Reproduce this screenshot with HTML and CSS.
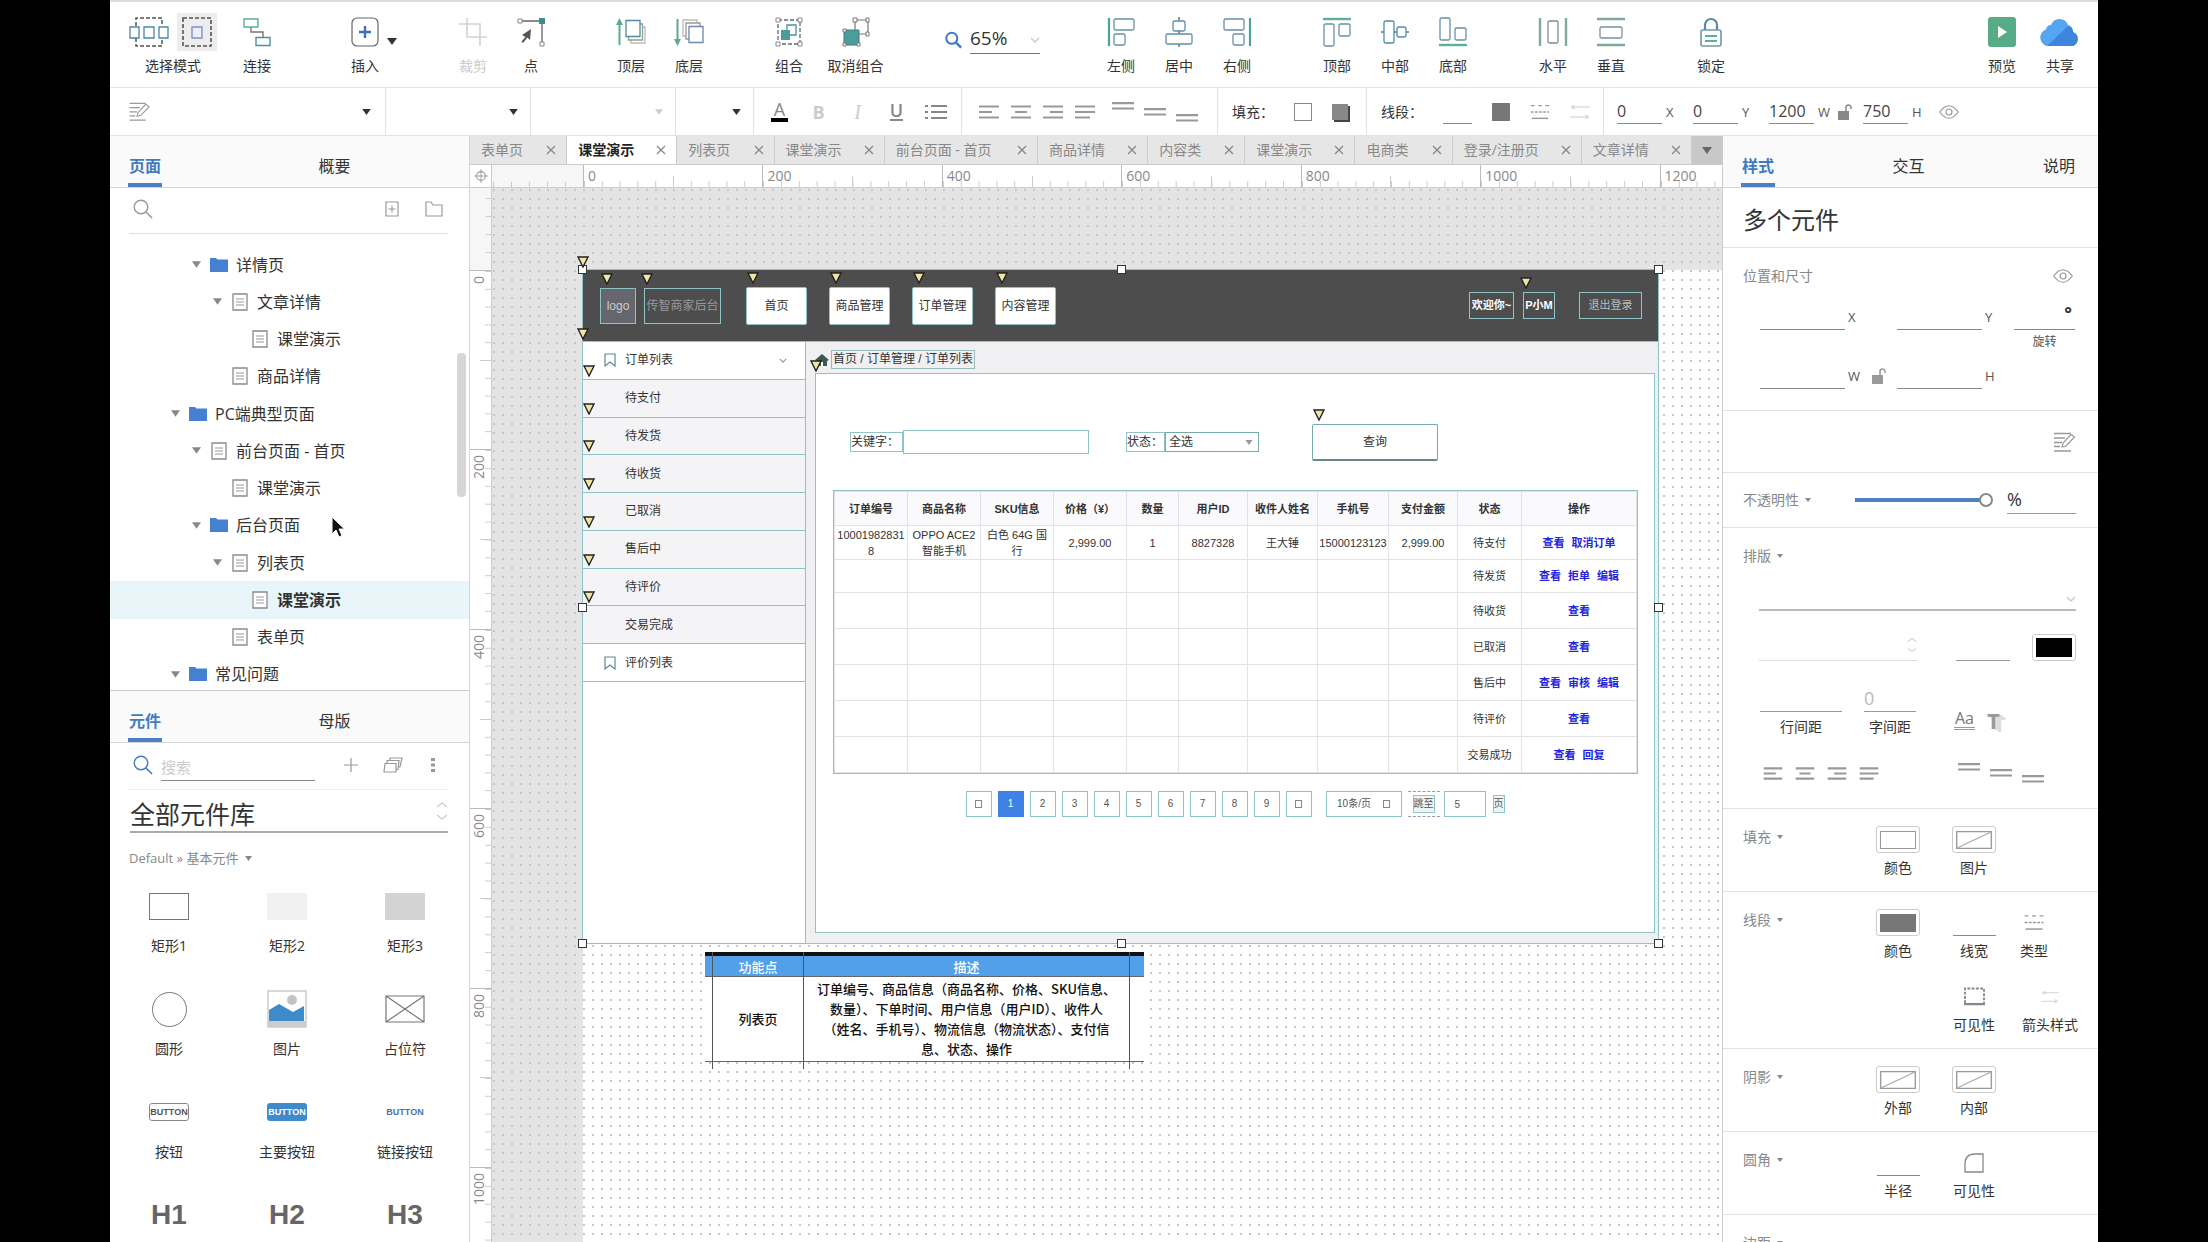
FILE: index.html
```html
<!DOCTYPE html>
<html lang="zh-CN">
<head>
<meta charset="utf-8">
<title>课堂演示 - 列表页</title>
<link rel="stylesheet" href="styles.css">
</head>
<body>
<svg class="sprite" aria-hidden="true">
  <symbol id="i-sel-multi" viewBox="0 0 40 30"><path d="M7 9V1h26v8M7 21v8h26v-8" fill="none" stroke="#555" stroke-width="1.5" stroke-dasharray="4 2"/><g fill="#fff" stroke="#4b86a8" stroke-width="1.3"><path d="M1 10h9v11H1zM15 10h10v11H15zM30 10h9v11h-9z"/></g></symbol>
  <symbol id="i-sel-one" viewBox="0 0 30 30"><path d="M1 1h28v28H1z" fill="none" stroke="#555" stroke-width="1.6" stroke-dasharray="4 2"/><path d="M10 10h10v11H10z" fill="#eef" stroke="#7b93c4" stroke-width="1.4"/></symbol>
  <symbol id="i-connect" viewBox="0 0 28 30"><g fill="none" stroke-width="1.4"><path d="M1 2h14v8H1z" stroke="#5fae9a"/><path d="M13 20.500h14v8H13z" stroke="#4b8f9d"/><path d="M8 10v5h12v5" stroke="#777"/></g></symbol>
  <symbol id="i-insert" viewBox="0 0 28 30"><rect x="1" y="1" width="26" height="28" rx="5" fill="#fff" stroke="#666" stroke-width="1.2"/><path d="M14 9v12M8 15h12" stroke="#3d70b8" stroke-width="2.4"/></symbol>
  <symbol id="i-crop" viewBox="0 0 28 30"><path d="M8 1v19h20M0 7h21v22" fill="none" stroke="#d2d2d2" stroke-width="1.6"/></symbol>
  <symbol id="i-point" viewBox="0 0 28 30"><path d="M4 4h21v22" fill="none" stroke="#666" stroke-width="1.3"/><path d="M1 2h4v4H1zM23 25h4v4h-4z" fill="#fff" stroke="#888"/><path d="M22 1h6v6h-6z" fill="#3f8a94"/><path d="M14 12l-1 11-2.500-2.500L6 26l-1.500-1.500 4-4.500L5 18z" fill="#555"/></symbol>
  <symbol id="i-front" viewBox="0 0 30 30"><path d="M3.500 28V4" stroke="#5bab8c" stroke-width="2"/><path d="M0 8l3.500-7L7 8z" fill="#5bab8c"/><g fill="#fff" stroke-width="1.300"><path d="M15 10h14v16H15z" stroke="#bbb"/><path d="M12.500 7h14v16h-14z" stroke="#999"/><path d="M10 3.500h14v16H10z" stroke="#4b8f9d"/></g></symbol>
  <symbol id="i-back" viewBox="0 0 30 30"><path d="M3.500 2v24" stroke="#5bab8c" stroke-width="2"/><path d="M0 22l3.500 7L7 22z" fill="#5bab8c"/><g fill="#fff" stroke-width="1.300"><path d="M9 3h14v16H9z" stroke="#bbb"/><path d="M12 6h14v16H12z" stroke="#999"/><path d="M15 9.500h14v16H15z" stroke="#6f86ad"/></g></symbol>
  <symbol id="i-group" viewBox="0 0 28 30"><path d="M3 3h22v24H3z" fill="none" stroke="#666" stroke-width="1.300" stroke-dasharray="4 2"/><g fill="#fff" stroke="#888"><path d="M1 1h4v4H1zM23 1h4v4h-4zM1 25h4v4H1zM23 25h4v4h-4z"/></g><path d="M12 8h9v10h-9z" fill="#fff" stroke="#4b8f9d" stroke-width="1.300"/><path d="M6 13h9v10H6z" fill="#4b9d9d"/></symbol>
  <symbol id="i-ungroup" viewBox="0 0 28 30"><path d="M13 3h13v14H13z" fill="#fff" stroke="#777" stroke-width="1.200"/><path d="M2 13h15v15H2z" fill="#4b9d9d" stroke="#3b7f80"/><g fill="#fff" stroke="#777"><path d="M11 1h4v4h-4zM24 1h3v4h-3zM24 15h3v4h-3zM1 12h3v3H1zM1 26h3v3H1zM15 26h3v3h-3z"/></g></symbol>
  <symbol id="i-al" viewBox="0 0 28 30"><path d="M2 1v28" stroke="#4ba0a0" stroke-width="2.200"/><g fill="#fff" stroke="#6a8fa8" stroke-width="1.300"><rect x="7" y="2" width="20" height="11" rx="1.500"/><rect x="7" y="17" width="11" height="11" rx="1.500"/></g></symbol>
  <symbol id="i-ac" viewBox="0 0 28 30"><path d="M14 0v30" stroke="#666" stroke-width="1.400"/><g fill="#fff" stroke="#5f8fa8" stroke-width="1.300"><rect x="8" y="4" width="12" height="10" rx="1.500"/><rect x="1" y="17" width="26" height="10" rx="1.500"/></g></symbol>
  <symbol id="i-ar" viewBox="0 0 28 30"><path d="M27 1v28" stroke="#4ba0a0" stroke-width="2.200"/><g fill="#fff" stroke="#6a8fa8" stroke-width="1.300"><rect x="1" y="2" width="20" height="11" rx="1.500"/><rect x="10" y="17" width="11" height="11" rx="1.500"/></g></symbol>
  <symbol id="i-at" viewBox="0 0 28 30"><path d="M0 2h28" stroke="#5fae9a" stroke-width="2.400"/><g fill="#fff" stroke="#6a8fa8" stroke-width="1.300"><rect x="1" y="7" width="10" height="22" rx="1.500"/><rect x="16" y="7" width="11" height="12" rx="1.500"/></g></symbol>
  <symbol id="i-am" viewBox="0 0 28 30"><path d="M0 15h28" stroke="#666" stroke-width="1.400"/><g fill="#fff" stroke="#4b8fa8" stroke-width="1.300"><rect x="3" y="4" width="10" height="22" rx="2"/><rect x="16" y="10" width="9" height="10" rx="2"/></g></symbol>
  <symbol id="i-ab" viewBox="0 0 28 30"><path d="M0 28h28" stroke="#5fae9a" stroke-width="2.400"/><g fill="#fff" stroke="#6a8fa8" stroke-width="1.300"><rect x="1" y="1" width="10" height="22" rx="1.500"/><rect x="16" y="11" width="11" height="12" rx="1.500"/></g></symbol>
  <symbol id="i-dh" viewBox="0 0 30 30"><path d="M2 1v28M28 1v28" stroke="#7fa99a" stroke-width="2.400"/><rect x="10" y="4" width="10" height="22" rx="1.500" fill="#fff" stroke="#888" stroke-width="1.300"/></symbol>
  <symbol id="i-dv" viewBox="0 0 28 30"><path d="M0 2h28M0 28h28" stroke="#7fa99a" stroke-width="2.400"/><rect x="3" y="10" width="22" height="11" rx="1.500" fill="#fff" stroke="#7b8fa8" stroke-width="1.300"/></symbol>
  <symbol id="i-lock" viewBox="0 0 24 30"><path d="M6 13V8a6 6 0 0 1 12 0v5" fill="none" stroke="#5f86a0" stroke-width="2.200"/><rect x="2" y="13" width="20" height="16" rx="2" fill="#fff" stroke="#6a9aa8" stroke-width="1.600"/><path d="M6 19h12M6 24h12" stroke="#5fae9a" stroke-width="2.200"/></symbol>
  <symbol id="i-play" viewBox="0 0 28 30"><rect width="28" height="30" rx="3" fill="#57ab87"/><path d="M10 9v12l9-6z" fill="#fff"/></symbol>
  <symbol id="i-cloud" viewBox="0 0 42 30"><path d="M9 29a8.500 8.500 0 0 1-2-16.500A5 5 0 0 1 12 8a9 9 0 0 1 17 0 7 7 0 0 1 5 7 7.500 7.500 0 0 1 0 14z" fill="#56a5f0"/><path d="M8 29L29 9a7 7 0 0 1 5 6 7.500 7.500 0 0 1 0 14z" fill="#3f85dc"/></symbol>
  <symbol id="i-search" viewBox="0 0 20 20"><circle cx="8" cy="8" r="6.800" fill="none" stroke="currentColor" stroke-width="1.400"/><path d="M13 13l6 6" stroke="currentColor" stroke-width="1.600"/></symbol>
  <symbol id="i-zoom" viewBox="0 0 20 20"><circle cx="8" cy="8" r="6.500" fill="none" stroke="currentColor" stroke-width="2.400"/><path d="M13 13l6 6" stroke="currentColor" stroke-width="2.800"/></symbol>
  <symbol id="i-caret" viewBox="0 0 10 7"><path d="M0 0h10L5 7z" fill="currentColor"/></symbol>
  <symbol id="i-edit" viewBox="0 0 22 20"><path d="M0 1.500h17M0 6h11M0 10.500h8M0 14.500h6M0 19h17" stroke="currentColor" stroke-width="1.300" fill="none"/><path d="M8 15l1-4 8-8.500 3.500 2.500-8.500 9z" fill="#fff" stroke="currentColor" stroke-width="1.200"/></symbol>
  <symbol id="i-list" viewBox="0 0 22 16"><path d="M0 2h3M0 8h3M0 14h3M6 2h16M6 8h16M6 14h16" stroke="currentColor" stroke-width="2.200"/></symbol>
  <symbol id="i-tl" viewBox="0 0 20 14"><path d="M0 1.500h20M0 7h13M0 12.500h20" stroke="currentColor" stroke-width="2.200"/></symbol>
  <symbol id="i-tc" viewBox="0 0 20 14"><path d="M0 1.500h20M4 7h12M0 12.500h20" stroke="currentColor" stroke-width="2.200"/></symbol>
  <symbol id="i-tr" viewBox="0 0 20 14"><path d="M0 1.500h20M7 7h13M0 12.500h20" stroke="currentColor" stroke-width="2.200"/></symbol>
  <symbol id="i-tj" viewBox="0 0 20 14"><path d="M0 1.500h20M0 7h20M0 12.500h15" stroke="currentColor" stroke-width="2.200"/></symbol>
  <symbol id="i-bars" viewBox="0 0 22 8"><path d="M0 1.200h22M0 6.500h22" stroke="currentColor" stroke-width="2.200"/></symbol>
  <symbol id="i-dash" viewBox="0 0 22 16"><path d="M1 1h22" stroke="currentColor" stroke-width="1.400" stroke-dasharray="4 4"/><path d="M1 8h20" stroke="currentColor" stroke-width="1.400" stroke-dasharray="3 1.500"/><path d="M2 15h18" stroke="currentColor" stroke-width="1.600"/></symbol>
  <symbol id="i-arrows" viewBox="0 0 20 14"><path d="M20 2H3M0 12h17M5 0L1 2.500 5 4M15 10l4 2-4 2" stroke="currentColor" fill="none" stroke-width="1"/></symbol>
  <symbol id="i-unlock" viewBox="0 0 14 16"><path d="M0 7h11v9H0z" fill="currentColor"/><path d="M8 7V3.500a2.500 2.500 0 0 1 5 0V5" fill="none" stroke="currentColor" stroke-width="1.500"/></symbol>
  <symbol id="i-eye" viewBox="0 0 20 14"><path d="M.700 7Q10-5.500 19.300 7 10 19.500.700 7z" fill="none" stroke="currentColor" stroke-width="1.200"/><circle cx="10" cy="7" r="3" fill="none" stroke="currentColor" stroke-width="1.200"/></symbol>
  <symbol id="i-x" viewBox="0 0 10 10"><path d="M1 1l8 8M9 1L1 9" stroke="currentColor" stroke-width="1.300"/></symbol>
  <symbol id="i-origin" viewBox="0 0 16 16"><path d="M8 0v16M0 8h16" stroke="currentColor"/><circle cx="8" cy="8" r="5" fill="none" stroke="currentColor" stroke-width="1.200"/></symbol>
  <symbol id="i-addpage" viewBox="0 0 14 16"><path d="M1 1h12v14H1zM7 4.500v7M3.500 8h7" fill="none" stroke="currentColor" stroke-width="1.200"/></symbol>
  <symbol id="i-folderline" viewBox="0 0 18 16"><path d="M1 15V1h5l2 3h9v11z" fill="none" stroke="currentColor" stroke-width="1.200"/></symbol>
  <symbol id="i-folder" viewBox="0 0 18 16"><path d="M0 1h6l1.500 1.500H18V15H0z" fill="#4580d2"/></symbol>
  <symbol id="i-page" viewBox="0 0 16 18"><path d="M1 1h14v16H1z" fill="#fff" stroke="#8a8a8a" stroke-width="1.300"/><path d="M4 6h8M4 9h8M4 12h8" stroke="#999" stroke-width="1.200"/></symbol>
  <symbol id="i-plus" viewBox="0 0 14 14"><path d="M7 0v14M0 7h14" stroke="currentColor" stroke-width="1.200"/></symbol>
  <symbol id="i-stack" viewBox="0 0 20 16"><g fill="#fff" stroke="currentColor" stroke-width="1.200"><path d="M7 1h12l-2 9H7z"/><path d="M4 3.500h12l-1 9H4z"/><path d="M2 6.500h11V15H1z"/></g></symbol>
  <symbol id="i-dots" viewBox="0 0 4 16"><path d="M0 1h4v3H0zM0 6.500h4v3H0zM0 12h4v3H0z" fill="currentColor"/></symbol>
  <symbol id="i-updown" viewBox="0 0 12 18"><path d="M1 5l5-4 5 4M1 13l5 4 5-4" fill="none" stroke="currentColor" stroke-width="1.300"/></symbol>
  <symbol id="i-down" viewBox="0 0 10 6"><path d="M1 1l4 4 4-4" fill="none" stroke="currentColor" stroke-width="1.500"/></symbol>
  <symbol id="i-bookmark" viewBox="0 0 12 14"><path d="M1 1h10v12L6 9l-5 4z" fill="none" stroke="#5f8a90" stroke-width="1.200"/></symbol>
  <symbol id="i-home" viewBox="0 0 14 14"><path d="M0 7l7-6 7 6-2 1v5H2V8z" fill="#3c5a55"/><path d="M6 9h2v4H6z" fill="#fff"/></symbol>
  <symbol id="i-note" viewBox="0 0 12 12"><path d="M1 1h10L6 11z" fill="#efe6a4" stroke="#222" stroke-width="1.400"/></symbol>
  <symbol id="i-none" viewBox="0 0 36 18"><path d="M.700.700h34.600v16.600H.700z" fill="#fff" stroke="#999" stroke-width="1.300"/><path d="M1 17L35 1" stroke="#aaa" stroke-width="1.300"/></symbol>
  <symbol id="i-sides" viewBox="0 0 22 20"><path d="M1 17V1.500h20V17" fill="none" stroke="#888" stroke-width="2" stroke-dasharray="3 1.500"/><path d="M0 18h22" stroke="#888" stroke-width="2.400"/></symbol>
  <symbol id="i-corner" viewBox="0 0 20 20"><path d="M1 19V11Q1 1 11 1h8v18z" fill="none" stroke="#888" stroke-width="1.300"/></symbol>
</svg>

<div class="app">
  <header class="toolbar">
    <div class="group">
      <div class="tool tool-wide">
        <div class="pair">
          <button class="bare mode" aria-label="相交选择"><svg width="40" height="30"><use href="#i-sel-multi"/></svg></button>
          <button class="bare mode mode-on" aria-label="包含选择"><svg width="30" height="30"><use href="#i-sel-one"/></svg></button>
        </div>
        <span>选择模式</span>
      </div>
      <button class="tool"><svg width="28" height="30"><use href="#i-connect"/></svg>连接</button>
    </div>
    <div class="group group-insert">
      <button class="tool"><svg width="28" height="30"><use href="#i-insert"/></svg>插入</button>
      <svg class="dark insert-caret" width="9" height="7"><use href="#i-caret"/></svg>
    </div>
    <div class="group">
      <button class="tool tool-off" disabled><svg width="28" height="30"><use href="#i-crop"/></svg>裁剪</button>
      <button class="tool"><svg width="28" height="30"><use href="#i-point"/></svg>点</button>
    </div>
    <div class="group">
      <button class="tool"><svg width="30" height="30"><use href="#i-front"/></svg>顶层</button>
      <button class="tool"><svg width="30" height="30"><use href="#i-back"/></svg>底层</button>
    </div>
    <div class="group">
      <button class="tool"><svg width="28" height="30"><use href="#i-group"/></svg>组合</button>
      <button class="tool tool-mid"><svg width="28" height="30"><use href="#i-ungroup"/></svg>取消组合</button>
    </div>
    <div class="zoom">
      <svg class="blue" width="17" height="18"><use href="#i-zoom"/></svg>
      <div class="zoom-field"><select aria-label="缩放"><option>65%</option></select><svg class="pale" width="10" height="6"><use href="#i-down"/></svg></div>
    </div>
    <div class="group">
      <button class="tool"><svg width="28" height="30"><use href="#i-al"/></svg>左侧</button>
      <button class="tool"><svg width="28" height="30"><use href="#i-ac"/></svg>居中</button>
      <button class="tool"><svg width="28" height="30"><use href="#i-ar"/></svg>右侧</button>
    </div>
    <div class="group">
      <button class="tool"><svg width="28" height="30"><use href="#i-at"/></svg>顶部</button>
      <button class="tool"><svg width="28" height="30"><use href="#i-am"/></svg>中部</button>
      <button class="tool"><svg width="28" height="30"><use href="#i-ab"/></svg>底部</button>
    </div>
    <div class="group">
      <button class="tool"><svg width="30" height="30"><use href="#i-dh"/></svg>水平</button>
      <button class="tool"><svg width="28" height="30"><use href="#i-dv"/></svg>垂直</button>
    </div>
    <div class="group">
      <button class="tool"><svg width="24" height="30"><use href="#i-lock"/></svg>锁定</button>
    </div>
    <div class="group group-end">
      <button class="tool"><svg width="28" height="30"><use href="#i-play"/></svg>预览</button>
      <button class="tool"><svg width="42" height="30"><use href="#i-cloud"/></svg>共享</button>
    </div>
  </header>

  <div class="options">
    <div class="seg seg-style"><svg class="grey" width="22" height="19"><use href="#i-edit"/></svg><select aria-label="样式"><option></option></select><svg class="dark" width="9" height="6"><use href="#i-caret"/></svg></div>
    <div class="seg seg-font"><select aria-label="字体"><option></option></select><svg class="dark" width="9" height="6"><use href="#i-caret"/></svg></div>
    <div class="seg seg-font"><select aria-label="字重"><option></option></select><svg class="pale" width="8" height="6"><use href="#i-caret"/></svg></div>
    <div class="seg seg-size"><select aria-label="字号"><option></option></select><svg class="dark" width="9" height="6"><use href="#i-caret"/></svg></div>
    <div class="seg seg-text">
      <button class="bare letter letter-a">A</button>
      <button class="bare letter letter-off"><b>B</b></button>
      <button class="bare letter letter-off serif"><em>I</em></button>
      <button class="bare letter letter-u">U</button>
      <button class="bare" aria-label="列表"><svg width="22" height="16"><use href="#i-list"/></svg></button>
    </div>
    <div class="seg seg-align">
      <button class="bare" aria-label="左对齐"><svg width="20" height="14"><use href="#i-tl"/></svg></button>
      <button class="bare" aria-label="居中对齐"><svg width="20" height="14"><use href="#i-tc"/></svg></button>
      <button class="bare" aria-label="右对齐"><svg width="20" height="14"><use href="#i-tr"/></svg></button>
      <button class="bare" aria-label="两端对齐"><svg width="20" height="14"><use href="#i-tj"/></svg></button>
      <div class="steps">
        <button class="bare step-a" aria-label="顶对齐"><svg width="22" height="8"><use href="#i-bars"/></svg></button>
        <button class="bare step-b" aria-label="中对齐"><svg width="22" height="8"><use href="#i-bars"/></svg></button>
        <button class="bare step-c" aria-label="底对齐"><svg width="22" height="8"><use href="#i-bars"/></svg></button>
      </div>
    </div>
    <div class="seg seg-fill"><span>填充：</span>
      <button class="bare sq sq-empty" aria-label="填充颜色"></button>
      <button class="bare sq sq-shadow" aria-label="阴影"></button>
    </div>
    <div class="seg seg-line"><span>线段：</span>
      <input class="line-width" aria-label="线宽">
      <button class="bare sq sq-solid" aria-label="线段颜色"></button>
      <button class="bare grey" aria-label="线段类型"><svg width="20" height="16"><use href="#i-dash"/></svg></button>
      <button class="bare pale" aria-label="箭头样式"><svg width="20" height="14"><use href="#i-arrows"/></svg></button>
    </div>
    <div class="seg seg-dims">
      <label><input value="0">X</label>
      <label><input value="0">Y</label>
      <label class="w-field"><input value="1200">W</label>
      <button class="bare lock-btn" aria-label="锁定比例"><svg width="14" height="16"><use href="#i-unlock"/></svg></button>
      <label><input value="750">H</label>
      <button class="bare grey" aria-label="可见性"><svg width="20" height="14"><use href="#i-eye"/></svg></button>
    </div>
  </div>

  <aside class="left">
    <div class="heads heads-two"><button class="head head-on">页面</button><button class="head">概要</button></div>
    <div class="finder">
      <svg class="grey" width="20" height="20"><use href="#i-search"/></svg>
      <button class="bare grey push" aria-label="添加页面"><svg width="14" height="16"><use href="#i-addpage"/></svg></button>
      <button class="bare grey" aria-label="添加文件夹"><svg width="18" height="16"><use href="#i-folderline"/></svg></button>
    </div>
    <div class="tree-wrap">
      <ul class="tree">
        <li class="d1"><svg class="tw" width="9" height="7"><use href="#i-caret"/></svg><svg width="18" height="16"><use href="#i-folder"/></svg>详情页</li>
        <li class="d2"><svg class="tw" width="9" height="7"><use href="#i-caret"/></svg><svg width="18" height="18"><use href="#i-page"/></svg>文章详情</li>
        <li class="d3"><i class="tw"></i><svg width="18" height="18"><use href="#i-page"/></svg>课堂演示</li>
        <li class="d2"><i class="tw"></i><svg width="18" height="18"><use href="#i-page"/></svg>商品详情</li>
        <li class="d0"><svg class="tw" width="9" height="7"><use href="#i-caret"/></svg><svg width="18" height="16"><use href="#i-folder"/></svg>PC端典型页面</li>
        <li class="d1"><svg class="tw" width="9" height="7"><use href="#i-caret"/></svg><svg width="18" height="18"><use href="#i-page"/></svg>前台页面 - 首页</li>
        <li class="d2"><i class="tw"></i><svg width="18" height="18"><use href="#i-page"/></svg>课堂演示</li>
        <li class="d1"><svg class="tw" width="9" height="7"><use href="#i-caret"/></svg><svg width="18" height="16"><use href="#i-folder"/></svg>后台页面
          <svg class="cursor" width="14" height="22" viewBox="0 0 14 22"><path d="M1 1v17l4-4 3 7 3-1.500-3-6.500h5.500z" fill="#111" stroke="#fff"/></svg></li>
        <li class="d2"><svg class="tw" width="9" height="7"><use href="#i-caret"/></svg><svg width="18" height="18"><use href="#i-page"/></svg>列表页</li>
        <li class="d3 current"><i class="tw"></i><svg width="18" height="18"><use href="#i-page"/></svg>课堂演示</li>
        <li class="d2"><i class="tw"></i><svg width="18" height="18"><use href="#i-page"/></svg>表单页</li>
        <li class="d0"><svg class="tw" width="9" height="7"><use href="#i-caret"/></svg><svg width="18" height="16"><use href="#i-folder"/></svg>常见问题</li>
      </ul>
      <div class="thumb"></div>
    </div>
    <section class="library">
      <div class="heads heads-two"><button class="head head-on">元件</button><button class="head">母版</button></div>
      <div class="lib-search">
        <svg class="blue" width="20" height="20"><use href="#i-search"/></svg>
        <input type="search" placeholder="搜索" aria-label="搜索">
        <button class="bare grey push" aria-label="添加"><svg width="14" height="14"><use href="#i-plus"/></svg></button>
        <button class="bare grey" aria-label="元件库"><svg width="20" height="16"><use href="#i-stack"/></svg></button>
        <button class="bare grey" aria-label="更多"><svg width="4" height="16"><use href="#i-dots"/></svg></button>
      </div>
      <div class="lib-pick"><select aria-label="元件库"><option>全部元件库</option></select><svg class="pale" width="12" height="18"><use href="#i-updown"/></svg></div>
      <button class="bare lib-cat">Default » 基本元件 <svg width="7" height="7"><use href="#i-caret"/></svg></button>
      <div class="widgets">
        <div class="widget"><div class="shape"><i class="rect rect-1"></i></div>矩形1</div>
        <div class="widget"><div class="shape"><i class="rect rect-2"></i></div>矩形2</div>
        <div class="widget"><div class="shape"><i class="rect rect-3"></i></div>矩形3</div>
        <div class="widget"><div class="shape"><i class="circle"></i></div>圆形</div>
        <div class="widget"><div class="shape"><svg width="40" height="38" viewBox="0 0 40 38"><path d="M1 1h38v36H1z" fill="#fff" stroke="#ccc" stroke-width="1.500"/><path d="M1 31h38v6H1z" fill="#ccc"/><circle cx="25" cy="10" r="5" fill="#c4c4c8"/><path d="M2 31V20l10-6 14 8 11-6v15z" fill="#3f8acb"/></svg></div>图片</div>
        <div class="widget"><div class="shape"><svg width="40" height="28" viewBox="0 0 40 28"><path d="M1 1h38v26H1zM1 1l38 26M39 1L1 27" fill="none" stroke="#777" stroke-width="1.200"/></svg></div>占位符</div>
        <div class="widget"><div class="shape"><i class="mini mini-line">BUTTON</i></div>按钮</div>
        <div class="widget"><div class="shape"><i class="mini mini-fill">BUTTON</i></div>主要按钮</div>
        <div class="widget"><div class="shape"><i class="mini mini-link">BUTTON</i></div>链接按钮</div>
        <div class="widget"><div class="shape heading">H1</div></div>
        <div class="widget"><div class="shape heading">H2</div></div>
        <div class="widget"><div class="shape heading">H3</div></div>
      </div>
    </section>
  </aside>

  <main class="stage">
    <div class="tabs">
      <div class="tab t3">表单页<svg width="10" height="10"><use href="#i-x"/></svg></div>
      <div class="tab t4 tab-on">课堂演示<svg width="10" height="10"><use href="#i-x"/></svg></div>
      <div class="tab t3">列表页<svg width="10" height="10"><use href="#i-x"/></svg></div>
      <div class="tab t4">课堂演示<svg width="10" height="10"><use href="#i-x"/></svg></div>
      <div class="tab t6">前台页面 - 首页<svg width="10" height="10"><use href="#i-x"/></svg></div>
      <div class="tab t4">商品详情<svg width="10" height="10"><use href="#i-x"/></svg></div>
      <div class="tab t3">内容类<svg width="10" height="10"><use href="#i-x"/></svg></div>
      <div class="tab t4">课堂演示<svg width="10" height="10"><use href="#i-x"/></svg></div>
      <div class="tab t3">电商类<svg width="10" height="10"><use href="#i-x"/></svg></div>
      <div class="tab t5">登录/注册页<svg width="10" height="10"><use href="#i-x"/></svg></div>
      <div class="tab t4">文章详情<svg width="10" height="10"><use href="#i-x"/></svg></div>
      <button class="bare tab-more" aria-label="更多标签"><svg width="10" height="7"><use href="#i-caret"/></svg></button>
    </div>
    <div class="ruler-x">
      <div class="origin grey"><svg width="14" height="16"><use href="#i-origin"/></svg></div>
      <div class="neg-x"></div>
      <div class="scale-x"><span>0</span><span>200</span><span>400</span><span>600</span><span>800</span><span>1000</span><span>1200</span></div>
    </div>
    <div class="ruler-y">
      <div class="neg-y"></div>
      <div class="scale-y"><span><b>0</b></span><span><b>200</b></span><span><b>400</b></span><span><b>600</b></span><span><b>800</b></span><span><b>1000</b></span><span></span></div>
    </div>
    <div class="canvas">
      <div class="positive"></div>
      <div class="dots"></div>
      <div class="frame">
        <svg class="note note-corner"><use href="#i-note"/></svg>
        <header class="shop-top">
          <div class="shop-logo">logo<svg class="note"><use href="#i-note"/></svg></div>
          <div class="shop-title">传智商家后台<svg class="note"><use href="#i-note"/></svg></div>
          <nav class="shop-nav">
            <button>首页<svg class="note"><use href="#i-note"/></svg></button>
            <button>商品管理<svg class="note"><use href="#i-note"/></svg></button>
            <button>订单管理<svg class="note"><use href="#i-note"/></svg></button>
            <button>内容管理<svg class="note"><use href="#i-note"/></svg></button>
          </nav>
          <div class="shop-user">
            <span class="hello">欢迎你~</span>
            <span class="user">P小M<svg class="note"><use href="#i-note"/></svg></span>
            <button class="logout">退出登录</button>
          </div>
        </header>
        <div class="shop-side">
          <svg class="note note-corner"><use href="#i-note"/></svg>
          <ul class="menu">
            <li class="top"><svg class="mark" width="12" height="14"><use href="#i-bookmark"/></svg>订单列表<svg class="fold grey" width="8" height="5"><use href="#i-down"/></svg><svg class="note"><use href="#i-note"/></svg></li>
            <li>待支付<svg class="note"><use href="#i-note"/></svg></li>
            <li>待发货<svg class="note"><use href="#i-note"/></svg></li>
            <li>待收货<svg class="note"><use href="#i-note"/></svg></li>
            <li>已取消<svg class="note"><use href="#i-note"/></svg></li>
            <li>售后中<svg class="note"><use href="#i-note"/></svg></li>
            <li>待评价<svg class="note"><use href="#i-note"/></svg></li>
            <li>交易完成</li>
            <li class="top"><svg class="mark" width="12" height="14"><use href="#i-bookmark"/></svg>评价列表</li>
          </ul>
        </div>
        <div class="shop-main">
          <div class="crumbs"><svg width="14" height="14"><use href="#i-home"/></svg><span>首页 / 订单管理 / 订单列表</span></div>
          <div class="panel">
            <svg class="note note-corner"><use href="#i-note"/></svg>
            <div class="filters">
              <label for="kw">关键字：</label><input id="kw">
              <label for="st" class="st-label">状态：</label>
              <div class="st-box"><select id="st"><option>全选</option></select><svg class="grey" width="8" height="5"><use href="#i-caret"/></svg></div>
              <button class="query">查询<svg class="note"><use href="#i-note"/></svg></button>
            </div>
            <table class="orders">
              <colgroup><col class="c73"><col class="c73"><col class="c73"><col class="c73"><col class="c52"><col class="c69"><col class="c70"><col class="c71"><col class="c69"><col class="c64"><col></colgroup>
              <thead><tr><th>订单编号</th><th>商品名称</th><th>SKU信息</th><th>价格（¥）</th><th>数量</th><th>用户ID</th><th>收件人姓名</th><th>手机号</th><th>支付金额</th><th>状态</th><th>操作</th></tr></thead>
              <tbody>
                <tr><td>10001982831<br>8</td><td>OPPO ACE2<br>智能手机</td><td>白色 64G 国<br>行</td><td>2,999.00</td><td>1</td><td>8827328</td><td>王大锤</td><td>15000123123</td><td>2,999.00</td><td>待支付</td><td><a href="#">查看</a><a href="#">取消订单</a></td></tr>
                <tr><td></td><td></td><td></td><td></td><td></td><td></td><td></td><td></td><td></td><td>待发货</td><td><a href="#">查看</a><a href="#">拒单</a><a href="#">编辑</a></td></tr>
                <tr><td></td><td></td><td></td><td></td><td></td><td></td><td></td><td></td><td></td><td>待收货</td><td><a href="#">查看</a></td></tr>
                <tr><td></td><td></td><td></td><td></td><td></td><td></td><td></td><td></td><td></td><td>已取消</td><td><a href="#">查看</a></td></tr>
                <tr><td></td><td></td><td></td><td></td><td></td><td></td><td></td><td></td><td></td><td>售后中</td><td><a href="#">查看</a><a href="#">审核</a><a href="#">编辑</a></td></tr>
                <tr><td></td><td></td><td></td><td></td><td></td><td></td><td></td><td></td><td></td><td>待评价</td><td><a href="#">查看</a></td></tr>
                <tr><td></td><td></td><td></td><td></td><td></td><td></td><td></td><td></td><td></td><td>交易成功</td><td><a href="#">查看</a><a href="#">回复</a></td></tr>
              </tbody>
            </table>
            <div class="pager">
              <button aria-label="上一页"><i class="tofu"></i></button><button class="on">1</button><button>2</button><button>3</button><button>4</button><button>5</button><button>6</button><button>7</button><button>8</button><button>9</button><button aria-label="下一页"><i class="tofu"></i></button>
              <button class="per">10条/页<i class="tofu"></i></button>
              <label for="jump" class="jump-label"><span>跳至</span></label><input id="jump" value="5"><span class="jump-unit">页</span>
            </div>
          </div>
        </div>
        <i class="grip g-t g-l"></i><i class="grip g-t g-c"></i><i class="grip g-t g-r"></i>
        <i class="grip g-m g-l"></i><i class="grip g-m g-r"></i>
        <i class="grip g-b g-l"></i><i class="grip g-b g-c"></i><i class="grip g-b g-r"></i>
      </div>
      <div class="spec">
        <table>
          <colgroup><col class="c91"><col></colgroup>
          <tr><th>功能点</th><th>描述</th></tr>
          <tr><td>列表页</td><td>订单编号、商品信息（商品名称、价格、SKU信息、<br>数量）、下单时间、用户信息（用户ID）、收件人<br>（姓名、手机号）、物流信息（物流状态）、支付信<br>息、状态、操作</td></tr>
        </table>
      </div>
    </div>
  </main>

  <aside class="right">
    <div class="heads heads-three"><button class="head head-on">样式</button><button class="head">交互</button><button class="head">说明</button></div>
    <h1 class="sel-name">多个元件</h1>
    <section class="sec sec-pos">
      <div class="sec-row"><span class="sec-title">位置和尺寸</span><button class="bare grey" aria-label="可见性"><svg width="20" height="14"><use href="#i-eye"/></svg></button></div>
      <div class="pos-grid">
        <label><input>X</label>
        <label><input>Y</label>
        <label class="rot"><span class="rot-in"><input><b>°</b></span>旋转</label>
        <label><input>W<svg class="grey gap-lock" width="14" height="16"><use href="#i-unlock"/></svg></label>
        <label><input>H</label>
      </div>
    </section>
    <section class="sec sec-edit"><button class="bare grey" aria-label="编辑样式"><svg width="22" height="20"><use href="#i-edit"/></svg></button></section>
    <section class="sec sec-opacity">
      <span class="sec-title">不透明性 <svg width="6" height="6"><use href="#i-caret"/></svg></span>
      <input type="range" min="0" max="100" value="100" aria-label="不透明性">
      <input class="pct" value="%" aria-label="百分比">
    </section>
    <section class="sec sec-type">
      <span class="sec-title">排版 <svg width="6" height="6"><use href="#i-caret"/></svg></span>
      <div class="under face"><select aria-label="字体"><option></option></select><svg class="pale" width="10" height="6"><use href="#i-down"/></svg></div>
      <div class="type-row">
        <div class="under weight"><select aria-label="字重"><option></option></select><svg class="pale" width="10" height="16"><use href="#i-updown"/></svg></div>
        <input class="under size" aria-label="字号">
        <button class="bare swatch" aria-label="文字颜色"><i class="ink"></i></button>
      </div>
      <div class="space-row">
        <label class="lead"><input>行间距</label>
        <label class="track"><input placeholder="0">字间距</label>
        <button class="bare aa">Aa</button>
        <button class="bare tee">T</button>
      </div>
      <div class="align-row">
        <div class="aligns">
          <button class="bare" aria-label="左对齐"><svg width="20" height="13"><use href="#i-tl"/></svg></button>
          <button class="bare" aria-label="居中"><svg width="20" height="13"><use href="#i-tc"/></svg></button>
          <button class="bare" aria-label="右对齐"><svg width="20" height="13"><use href="#i-tr"/></svg></button>
          <button class="bare" aria-label="两端"><svg width="20" height="13"><use href="#i-tj"/></svg></button>
        </div>
        <div class="steps">
          <button class="bare step-a" aria-label="顶"><svg width="22" height="8"><use href="#i-bars"/></svg></button>
          <button class="bare step-b" aria-label="中"><svg width="22" height="8"><use href="#i-bars"/></svg></button>
          <button class="bare step-c" aria-label="底"><svg width="22" height="8"><use href="#i-bars"/></svg></button>
        </div>
      </div>
    </section>
    <section class="sec sec-grid">
      <span class="sec-title">填充 <svg width="6" height="6"><use href="#i-caret"/></svg></span>
      <button class="prop"><i class="swatch"><i class="blank"></i></i>颜色</button>
      <button class="prop"><i class="swatch"><svg width="36" height="18"><use href="#i-none"/></svg></i>图片</button>
    </section>
    <section class="sec sec-grid sec-lines">
      <span class="sec-title">线段 <svg width="6" height="6"><use href="#i-caret"/></svg></span>
      <button class="prop"><i class="swatch"><i class="greyfill"></i></i>颜色</button>
      <label class="prop"><input>线宽</label>
      <button class="prop prop-last"><i class="slot"><svg class="grey" width="22" height="15"><use href="#i-dash"/></svg></i>类型</button>
      <button class="prop prop-vis"><i class="slot"><svg width="21" height="19"><use href="#i-sides"/></svg></i>可见性</button>
      <button class="prop prop-arrow"><i class="slot pale"><svg width="20" height="12"><use href="#i-arrows"/></svg></i>箭头样式</button>
    </section>
    <section class="sec sec-grid">
      <span class="sec-title">阴影 <svg width="6" height="6"><use href="#i-caret"/></svg></span>
      <button class="prop"><i class="swatch"><svg width="36" height="18"><use href="#i-none"/></svg></i>外部</button>
      <button class="prop"><i class="swatch"><svg width="36" height="18"><use href="#i-none"/></svg></i>内部</button>
    </section>
    <section class="sec sec-grid">
      <span class="sec-title">圆角 <svg width="6" height="6"><use href="#i-caret"/></svg></span>
      <label class="prop"><input>半径</label>
      <button class="prop"><i class="slot"><svg width="20" height="20"><use href="#i-corner"/></svg></i>可见性</button>
    </section>
    <section class="sec sec-grid">
      <span class="sec-title">边距 <svg width="6" height="6"><use href="#i-caret"/></svg></span>
    </section>
  </aside>
</div>
</body>
</html>
```

FILE: styles.css
```css
:root {
  --ui: "Open Sans", "Noto Sans CJK SC", sans-serif;
  --wire: "Liberation Sans", "Noto Sans CJK SC", sans-serif;
  --blue: #3f7cc4;
  --line: #e2e2e2;
  --teal: #8fc3c8;
}

*, *::before, *::after { box-sizing: border-box; }

body {
  margin: 0;
  background: #000;
  color: #333;
  font: 14px/18px var(--ui);
  overflow: hidden;
}

button, input, select { font: inherit; color: inherit; margin: 0; }
button { border: 0; background: none; padding: 0; }
input, select { border: 0; border-radius: 0; background: none; padding: 0; min-width: 0; outline: 0; }
select { appearance: none; }
ul { list-style: none; margin: 0; padding: 0; }
svg { display: block; flex: none; }
i { font-style: normal; }
.sprite { position: absolute; width: 0; height: 0; }

.bare { display: flex; align-items: center; justify-content: center; }
.grey { color: #999; }
.dark { color: #333; }
.pale { color: #ccc; }
.blue { color: var(--blue); }
.push { margin-left: auto; }

.app {
  display: grid;
  grid-template-columns: 360px minmax(0, 1fr) 376px;
  grid-template-rows: auto auto minmax(0, 1fr);
  height: 100vh;
  margin: 0 110px;
  background: #fff;
  overflow: hidden;
}

/* main toolbar */
.toolbar {
  grid-column: 1 / -1;
  display: flex;
  gap: 42px;
  height: 88px;
  padding: 15px 9px 0 17px;
  border-top: 2px solid #ddd;
  border-bottom: 1px solid var(--line);
}
.group { display: flex; }
.group-insert { padding-left: 8px; }
.group-end { margin-left: auto; }
.tool {
  display: flex;
  flex-direction: column;
  align-items: center;
  gap: 10px;
  width: 58px;
  height: 58px;
}
.tool-wide { width: 92px; margin-right: 9px; }
.tool-mid { width: 75px; }
.tool-off { color: #ccc; }
.pair { display: flex; gap: 8px; height: 30px; align-items: center; }
.mode { height: 30px; }
.mode-on { width: 40px; height: 38px; background: #ededed; }
.insert-caret { width: 18px; margin: 21px 0 0 -10px; padding-right: 2px; }
.zoom { display: flex; padding: 0 10px; gap: 8px; align-items: flex-start; }
.zoom > svg { margin-top: 14px; }
.zoom-field {
  display: flex;
  align-items: center;
  width: 70px;
  height: 28px;
  margin-top: 9px;
  border-bottom: 1px solid #777;
}
.zoom-field select { flex: 1; height: 28px; padding-bottom: 4px; font-size: 19px; line-height: 24px; }

/* option bar */
.options {
  grid-column: 1 / -1;
  display: flex;
  height: 48px;
  border-bottom: 1px solid var(--line);
}
.seg { display: flex; align-items: center; border-right: 1px solid var(--line); }
.seg select { flex: 1; }
.seg-style { width: 276px; padding: 0 14px 0 19px; }
.seg-font { width: 145px; padding: 0 12px; }
.seg-size { width: 78px; padding: 0 12px; }
.seg-text { display: grid; grid-template-columns: repeat(5, 39px); padding: 0 6px; color: #888; }
.letter { font-size: 18px; line-height: 18px; justify-self: center; }
.letter-a { border-bottom: 4px solid #000; width: 17px; line-height: 17px; }
.letter-off { color: #ccc; }
.serif { font-family: "Liberation Serif", serif; font-size: 20px; }
.letter-u { border-bottom: 2px solid #888; width: 13px; line-height: 17px; font-weight: 600; }
.seg-align { padding: 0 14px 0 11px; color: #999; }
.seg-align .bare { width: 32px; }
.seg-align .steps { margin-left: 6px; }
.steps { display: flex; align-items: center; height: 20px; color: #999; }
.step-a { align-self: flex-start; }
.step-c { align-self: flex-end; }
.seg-fill { padding: 0 16px 0 14px; gap: 20px; }
.seg-fill, .seg-line { color: #333; }
.sq { width: 18px; height: 18px; }
.sq-empty { border: 1px solid #888; }
.sq-shadow { background: #888; box-shadow: 2px 2px 0 #444; width: 16px; height: 16px; margin-right: 2px; }
.sq-solid { background: #777; }
.seg-line { padding: 0 13px 0 14px; gap: 20px; color: #777; }
.seg-line span { color: #333; }
.line-width { width: 29px; height: 24px; border-bottom: 1px solid #888; }
.seg-dims { border: 0; padding-left: 13px; }
.seg-dims label { display: flex; align-items: center; gap: 4px; width: 76px; font-size: 13px; color: #555; }
.seg-dims .w-field { width: 69px; }
.seg-dims input { width: 45px; height: 24px; border-bottom: 1px solid #888; font-size: 16px; color: #444; }
.lock-btn { width: 14px; margin-right: 11px; color: #888; }

/* side panels */
.left { display: flex; flex-direction: column; border-right: 1px solid #d4d4d4; min-height: 0; }
.heads { display: flex; flex: none; height: 52px; padding: 0 22px 0 18px; background: #fafafa; border-bottom: 1px solid #d4d4d4; }
.heads-two { display: grid; grid-template-columns: 5fr 4fr; justify-items: start; padding-right: 0; }
.heads-three { justify-content: space-between; }
.head { height: 51px; padding: 12px 1px 0; font-size: 16px; border-bottom: 4px solid transparent; }
.head-on { color: var(--blue); font-weight: 600; border-color: #4d7fc4; }
.finder { display: flex; align-items: center; gap: 26px; flex: none; height: 46px; margin: 0 21px 0 19px; padding: 0 5px 3px 4px; border-bottom: 1px solid #ddd; }

.tree-wrap { position: relative; flex: none; height: 456px; overflow: hidden; padding-top: 12px; }
.tree { display: grid; grid-template-rows: repeat(12, 1fr); height: 447px; font-size: 16px; }
.tree li { position: relative; display: flex; align-items: center; gap: 8px; }
.tree .tw { width: 9px; margin-right: 1px; color: #888; }
.d0 { padding-left: 61px; }
.d1 { padding-left: 82px; }
.d2 { padding-left: 103px; }
.d3 { padding-left: 123px; }
.current { background: #e8f6f9; font-weight: 600; }
.cursor { position: absolute; left: 221px; top: 9px; }
.thumb { position: absolute; right: 3px; top: 119px; width: 9px; height: 144px; border-radius: 4px; background: #d6d6d6; }

.library { flex: 1; min-height: 0; border-top: 1px solid #ccc; }
.lib-search { display: flex; align-items: center; gap: 28px; height: 47px; margin: 0 21px 0 19px; padding: 0 13px 3px 4px; border-bottom: 1px solid #eee; }
.lib-search input { flex: none; width: 154px; height: 28px; margin: 5px 0 0 -20px; border-bottom: 1px solid #888; font-size: 15px; }
.lib-search input::placeholder { color: #ccc; }
.lib-search .push { margin-right: -3px; }
.lib-pick { display: flex; align-items: center; height: 43px; margin: 0 21px 0 20px; border-bottom: 2px solid #aaa; }
.lib-pick select { flex: 1; height: 41px; padding-top: 6px; font-size: 25px; line-height: 34px; color: #333; }
.lib-cat { gap: 7px; margin: 16px 0 0 19px; color: #888; font-size: 13px; }
.widgets { display: grid; grid-template-columns: repeat(3, 1fr); grid-auto-rows: 103px; padding: 13px 5px 0 0; }
.widget { display: flex; flex-direction: column; align-items: center; gap: 5px; }
.shape { display: flex; align-items: center; justify-content: center; height: 52px; }
.rect { width: 40px; height: 27px; }
.rect-1 { border: 1px solid #777; }
.rect-2 { background: #f1f1f1; }
.rect-3 { background: #d3d3d3; }
.circle { width: 35px; height: 35px; border: 1px solid #777; border-radius: 50%; }
.mini { width: 40px; height: 18px; border-radius: 3px; font: bold 9px/16px var(--wire); text-align: center; }
.mini-line { border: 1px solid #888; color: #555; }
.mini-fill { background: #3f8acb; color: #fff; line-height: 18px; }
.mini-link { color: #4a73b0; line-height: 18px; }
.heading { font: bold 28px/52px var(--wire); color: #666; }

/* document tabs */
.stage {
  display: grid;
  grid-template-columns: 22px minmax(0, 1fr);
  grid-template-rows: 29px 23px minmax(0, 1fr);
  min-height: 0;
  overflow: hidden;
}
.tabs { grid-column: 1 / -1; display: flex; background: #e6e6e6; border-bottom: 1px solid #ccc; }
.tab { display: flex; align-items: center; justify-content: space-between; padding: 0 10px 0 11px; border-right: 1px solid #ccc; color: #888; white-space: nowrap; min-width: 0; }
.t3 { flex: 75 1 0; }
.t4 { flex: 88 1 0; }
.t5 { flex: 107 1 0; }
.t6 { flex: 131 1 0; }
.tab-on { background: #fff; color: #222; font-weight: 600; }
.tab svg { color: #888; }
.tab-more { width: 30px; background: #c8c8c8; color: #666; }

/* rulers */
.ruler-x { grid-column: 1 / -1; display: flex; overflow: hidden; border-bottom: 1px solid #ccc; color: #888; }
.origin { display: flex; align-items: center; justify-content: center; flex: none; width: 22px; border-right: 1px solid #ccc; }
.neg-x { flex: none; width: 91px; background: linear-gradient(90deg, #ccc 1px, transparent 1px) 1px 100% / 18px 5px repeat-x #f6f6f6; }
.scale-x { display: grid; grid-template-columns: repeat(7, 1fr); flex: none; width: 1256px; }
.scale-x span {
  padding: 2px 0 0 4px;
  border-left: 1px solid #bbb;
  background:
    linear-gradient(90deg, #ccc 1px, transparent 1px) 0 100% / 10% 6px repeat-x,
    linear-gradient(#ccc, #ccc) 50% 100% / 1px 11px no-repeat;
}
.ruler-y { overflow: hidden; border-right: 1px solid #ccc; color: #888; }
.neg-y { height: 82px; background: linear-gradient(#ccc 1px, transparent 1px) 100% 10px / 5px 18px repeat-y #f6f6f6; }
.scale-y { display: grid; grid-template-rows: repeat(7, 1fr); height: 1256px; }
.scale-y span {
  border-top: 1px solid #bbb;
  padding-top: 5px;
  background:
    linear-gradient(#ccc 1px, transparent 1px) 100% 0 / 6px 10% repeat-y,
    linear-gradient(#ccc, #ccc) 100% 50% / 11px 1px no-repeat;
}
.scale-y b { display: block; width: 18px; font-weight: 400; writing-mode: vertical-rl; transform: rotate(180deg); }

/* canvas */
.canvas { position: relative; background: #e4e4e4; overflow: hidden; }
.positive { position: absolute; left: 91px; top: 82px; right: 0; bottom: 0; background: #fff; }
.dots { position: absolute; inset: 0; background: radial-gradient(circle at 1px 1px, #c6c6ca 1px, transparent 1px) 1px 1px / 9px 9px; }
.frame {
  position: absolute;
  left: 91px;
  top: 82px;
  width: 1075px;
  height: 673px;
  display: grid;
  grid-template-columns: 223px 1fr;
  grid-template-rows: 71px 1fr;
  outline: 1px solid var(--teal);
  background: #fff;
  font: 12px/16px var(--wire);
  color: #333;
}
.note { position: absolute; left: 0; top: -16px; width: 12px; height: 12px; }
.note-corner { left: -6px; top: -14px; z-index: 2; }
.grip { position: absolute; width: 9px; height: 9px; background: #fff; border: 1px solid #333; }
.g-l { left: -5px; }
.g-c { left: calc(50% - 4px); }
.g-r { right: -5px; }
.g-t { top: -5px; }
.g-m { top: calc(50% - 4px); }
.g-b { bottom: -5px; }

.shop-top { grid-column: 1 / -1; display: flex; align-items: center; padding: 0 16px 0 17px; background: #4d4d4d; }
.shop-top > *, .shop-nav button, .shop-user > * { position: relative; }
.shop-logo, .shop-title { display: flex; align-items: center; justify-content: center; height: 36px; border: 1px solid var(--teal); }
.shop-logo { width: 36px; background: #66666e; color: #ccc; }
.shop-title { width: 77px; margin-left: 8px; color: #999; white-space: nowrap; }
.shop-title .note, .user .note { left: -4px; }
.shop-nav { display: flex; gap: 22px; margin-left: 25px; }
.shop-nav button { width: 61px; height: 38px; background: #fff; border: 1px solid var(--teal); border-radius: 2px; }
.shop-user { display: flex; align-items: center; margin-left: auto; color: #fff; }
.shop-user > * { height: 27px; border: 1px solid var(--teal); line-height: 25px; text-align: center; white-space: nowrap; }
.hello { width: 45px; font-size: 11px; font-weight: 600; }
.user { width: 32px; margin-left: 9px; font-size: 11px; font-weight: 600; }
.logout { width: 63px; margin-left: 24px; font-size: 11px; color: #bbb; }

.shop-side { position: relative; border-right: 1px solid var(--teal); border-top: 1px solid var(--teal); }
.menu { display: grid; grid-template-rows: repeat(9, 1fr); height: 340px; }
.menu li { position: relative; display: flex; align-items: center; padding-left: 42px; background: #f4f4f7; border-bottom: 1px solid var(--teal); }
.menu .top { background: #fff; padding-left: 21px; }
.mark { margin-right: 9px; }
.fold { margin-left: auto; margin-right: 18px; }
.menu .note { top: auto; bottom: 2px; }

.shop-main { display: flex; flex-direction: column; padding: 0 3px 10px 9px; background: #f0f0f3; border-top: 1px solid var(--teal); }
.crumbs { display: flex; align-items: center; gap: 2px; height: 31px; padding-top: 4px; }
.crumbs span { border: 1px solid #9bb; line-height: 17px; padding: 0 1px; white-space: nowrap; }
.panel { position: relative; flex: 1; background: #fff; border: 1px solid var(--teal); padding: 49px 17px 0; }
.filters { display: flex; align-items: center; height: 38px; padding-left: 17px; }
.filters label { width: 53px; height: 20px; line-height: 18px; border: 1px solid var(--teal); white-space: nowrap; }
.filters input { width: 186px; height: 24px; border: 1px solid var(--teal); }
.filters .st-label { width: 39px; margin-left: 37px; }
.st-box { display: flex; align-items: center; width: 94px; height: 20px; padding: 0 5px 0 3px; border: 1px solid #7aa; }
.st-box select { flex: 1; height: 18px; line-height: 16px; }
.query { position: relative; width: 126px; height: 37px; margin-left: 53px; border: 1px solid #7aa; border-bottom: 2px solid #688; border-radius: 2px; }

.orders { table-layout: fixed; width: 803px; height: 281px; margin: 30px 0 0 1px; border-collapse: collapse; outline: 1px solid var(--teal); font-size: 11px; line-height: 16px; }
.c52 { width: 52px; } .c64 { width: 64px; } .c69 { width: 69px; } .c70 { width: 70px; }
.c71 { width: 71px; } .c73 { width: 73px; } .c91 { width: 91px; }
.orders th, .orders td { height: 36px; padding: 0; border: 1px solid #e3e3e6; text-align: center; white-space: nowrap; }
.orders th { height: 34px; background: #fafafc; font-weight: 600; }
.orders tbody tr:first-child td { height: 34px; }
.orders tbody tr:nth-child(2) td { height: 33px; }
.orders a { color: #2323e0; text-decoration: none; font-weight: 600; }
.orders a + a { margin-left: 7px; }

.pager { display: flex; justify-content: center; align-items: center; margin-top: 18px; font-size: 10px; color: #555; }
.pager button { display: flex; align-items: center; justify-content: center; width: 26px; height: 26px; margin-right: 6px; border: 1px solid var(--teal); }
.pager .on { background: #3f82e6; color: #fff; border-color: #3f82e6; }
.pager .per { width: 76px; gap: 12px; margin: 0 6px 0 8px; }
.tofu { width: 7px; height: 8px; border: 1px solid #888; }
.jump-label { display: flex; align-items: center; height: 26px; padding: 0 5px; border: 1px dashed #99a; border-width: 1px 0; }
.jump-label span, .jump-unit { border: 1px solid var(--teal); line-height: 16px; background: #eef5f5; }
.pager input { width: 42px; height: 26px; margin-left: 4px; padding-left: 10px; border: 1px solid var(--teal); }
.jump-unit { margin-left: 7px; }

.spec { position: absolute; left: 213px; top: 764px; width: 439px; height: 117px; padding: 0 14px 0 7px; background: linear-gradient(#111 4px, #52a0ea 4px, #52a0ea 24px, #666 24px, #666 25px, #fff 25px, #fff 109px, #666 109px, #666 110px, transparent 110px); }
.spec table { table-layout: fixed; width: 100%; height: 117px; border-collapse: collapse; font: 500 13px/20px "Noto Sans CJK SC", sans-serif; color: #111; }
.spec th, .spec td { padding: 0; border: 1px solid #555; border-width: 0 1px; text-align: center; white-space: nowrap; }
.spec th { height: 25px; padding-top: 4px; color: #fff; font-weight: 500; }
.spec td { padding-bottom: 8px; }

/* inspector */
.right { border-left: 1px solid #ccc; overflow: hidden; display: flex; flex-direction: column; }
.sel-name { flex: none; height: 60px; margin: 0; padding: 16px 20px 0; font-size: 24px; font-weight: 400; line-height: 32px; border-bottom: 1px solid var(--line); }
.sec { flex: none; border-bottom: 1px solid var(--line); padding: 0 22px 0 20px; }
.sec-title { display: flex; align-items: center; gap: 6px; height: 18px; color: #888; white-space: nowrap; }
.sec-row { display: flex; justify-content: space-between; align-items: center; }
.sec-row .bare { margin-right: 3px; }
.sec-pos { height: 163px; padding-top: 19px; }
.pos-grid { display: grid; grid-template-columns: 137px 117px 61px; grid-template-rows: 59px 59px; padding: 19px 0 0 17px; }
.pos-grid label { display: flex; align-items: center; align-content: flex-start; gap: 3px; height: 26px; font-size: 13px; color: #555; }
.pos-grid input { width: 85px; height: 26px; border-bottom: 1px solid #888; }
.pos-grid .rot { flex-direction: column; align-items: center; height: 45px; font-size: 12px; }
.rot-in { position: relative; height: 26px; }
.pos-grid .rot input { width: 61px; }
.rot-in b { position: absolute; right: 3px; top: 0; font-size: 18px; color: #333; }
.gap-lock { margin-left: 9px; }
.sec-edit { display: flex; align-items: center; justify-content: flex-end; height: 62px; }
.sec-opacity { display: flex; align-items: center; justify-content: space-between; height: 55px; }
.sec-opacity .sec-title { width: 97px; }
.sec-opacity input[type=range] { appearance: none; width: 138px; height: 14px; background: linear-gradient(#4d80c2, #4d80c2) 0 50% / 130px 4px no-repeat; }
.sec-opacity input[type=range]::-webkit-slider-thumb { appearance: none; width: 14px; height: 14px; border: 2px solid #888; border-radius: 50%; background: #fff; }
.pct { width: 69px; height: 28px; padding-bottom: 2px; border-bottom: 1px solid #999; font-size: 18px; }
.sec-type { height: 281px; padding-top: 19px; }
.under { display: flex; align-items: center; justify-content: space-between; border-bottom: 1px solid #999; }
.under select { flex: 1; }
.face { height: 30px; margin: 16px 0 0 16px; border-bottom: 2px solid #bbb; }
.face svg { margin-top: 8px; }
.type-row { display: flex; align-items: flex-end; justify-content: space-between; height: 50px; padding-left: 16px; }
.weight { width: 158px; height: 32px; border-color: #ddd; }
.type-row .size { width: 54px; height: 32px; margin-left: 16px; }
.swatch { display: flex; align-items: center; justify-content: center; width: 44px; height: 27px; border: 1px solid #ccc; border-radius: 3px; }
.ink { width: 36px; height: 19px; background: #000; }
.blank { width: 36px; height: 18px; border: 1px solid #999; }
.greyfill { width: 36px; height: 18px; background: #777; }
.space-row { display: flex; padding: 24px 0 0 17px; color: #333; }
.space-row label { display: flex; flex-direction: column; align-items: center; gap: 6px; }
.space-row input { width: 100%; height: 27px; border-bottom: 1px solid #999; font-size: 18px; }
.space-row input::placeholder { color: #bbb; }
.lead { width: 82px; }
.track { width: 52px; margin-left: 22px; }
.aa { width: 21px; height: 21px; margin: 24px 12px 0 38px; border-bottom: 3px double #999; font-size: 16px; color: #777; }
.tee { height: 21px; margin-top: 24px; font-size: 22px; font-weight: 700; color: #999; text-shadow: 3px 1px #ddd, 6px 3px #ddd; }
.align-row { display: flex; align-items: center; justify-content: space-between; padding: 27px 32px 0 20px; }
.align-row .aligns, .align-row .steps { display: flex; gap: 12px; color: #999; }
.align-row .steps { gap: 10px; }
.sec-grid { display: grid; grid-template-columns: 125px 60px 92px 1fr; justify-items: center; align-content: start; padding-top: 17px; padding-bottom: 11px; }
.sec-grid .sec-title { justify-self: start; margin-top: 2px; }
.prop { display: flex; flex-direction: column; align-items: center; gap: 6px; width: 60px; line-height: 18px; height: 54px; color: #333; }
.prop input { width: 43px; height: 27px; border-bottom: 1px solid #888; }
.slot { display: flex; align-items: center; justify-content: center; height: 27px; }
.prop-last { justify-self: start; width: 28px; }
.sec-lines { row-gap: 20px; }
.prop-vis { grid-column: 3; }
.prop-arrow { grid-column: 4; }
```
